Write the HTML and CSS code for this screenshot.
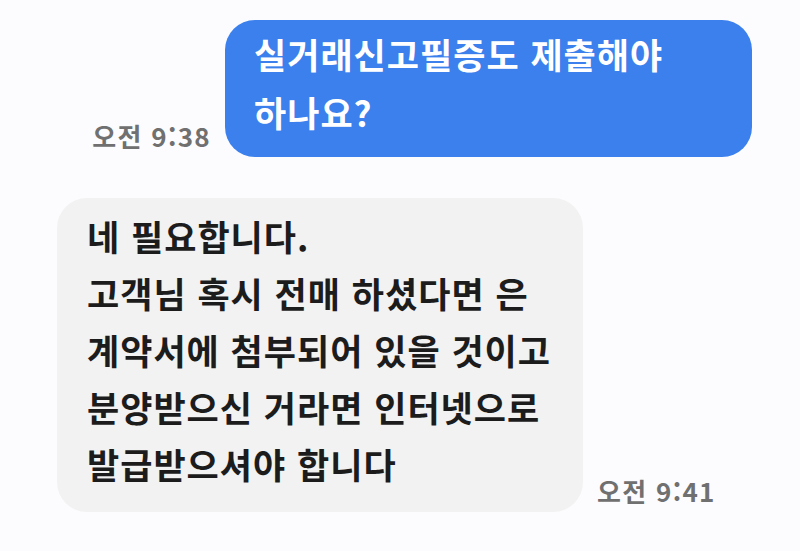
FILE: index.html
```html
<!DOCTYPE html>
<html lang="ko">
<head>
<meta charset="UTF-8" />
<meta name="viewport" content="width=device-width, initial-scale=1" />
<title>채팅</title>
<link rel="stylesheet" href="styles.css">
</head>
<body>
<div class="chat">
  <!-- sent message -->
  <div class="row sent">
    <span class="time">오전 9:38</span>
    <div class="bubble bubble-blue">실거래신고필증도 제출해야<br>하나요?</div>
  </div>

  <!-- received message -->
  <div class="row received">
    <div class="bubble bubble-gray">네 필요합니다.<br>고객님 혹시 전매 하셨다면 은<br>계약서에 첨부되어 있을 것이고<br>분양받으신 거라면 인터넷으로<br>발급받으셔야 합니다</div>
    <span class="time">오전 9:41</span>
  </div>
</div>
</body>
</html>
```

FILE: styles.css
```css
* {
  box-sizing: border-box;
}
body {
  margin: 0;
  background: #fcfcfe;
  font-family: "Noto Sans CJK KR", "Noto Sans", sans-serif;
}

.chat {
  display: flex;
  flex-direction: column;
  gap: 41px;
  padding: 20px 48px 0 57px;
}

.row {
  display: flex;
  align-items: flex-end;
  gap: 14px;
}

.row.sent {
  justify-content: flex-end;
}

.bubble {
  font-size: 35px;
  font-weight: 600;
  letter-spacing: 1px;
  border-radius: 30px;
  white-space: nowrap;
}

.bubble-blue {
  width: 527px;
  height: 137px;
  padding: 5px 20px 0 29px;
  line-height: 58px;
  background: #3b80ec;
  color: #fff;
}

.bubble-gray {
  width: 526px;
  height: 314px;
  padding: 9px 20px 0 30px;
  line-height: 57px;
  background: #f2f2f2;
  color: #1c1c1c;
}

.time {
  font-size: 26px;
  font-weight: 600;
  letter-spacing: 1.3px;
  line-height: 30px;
  color: #707070;
  padding-bottom: 6px;
  white-space: nowrap;
}
```
